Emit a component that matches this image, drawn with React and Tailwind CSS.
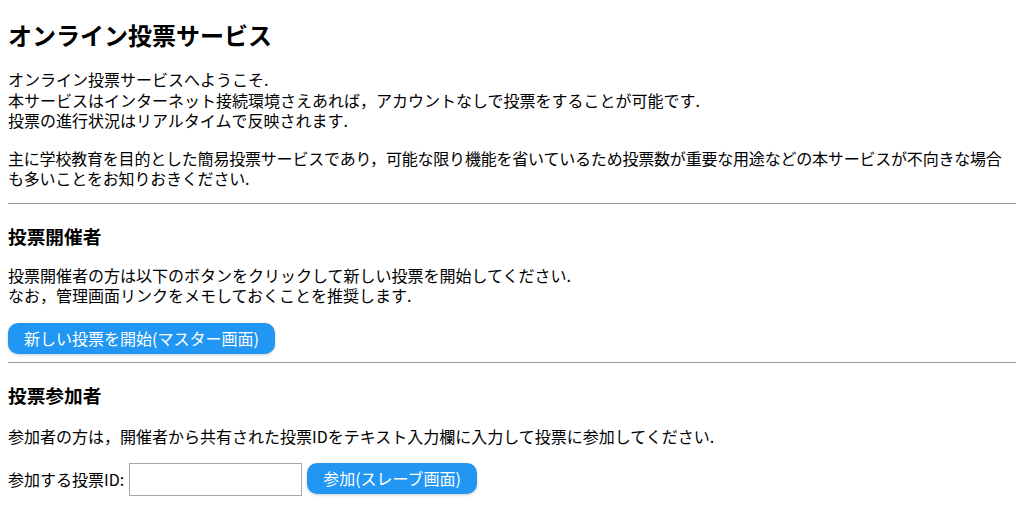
export default function App() {
  return (
    <div
      className="px-2 text-[16px] text-black bg-white min-h-[505px]"
      style={{ fontFamily: '"Noto Sans CJK JP", "Noto Sans", sans-serif' }}
    >
      <h2 className="pt-[21px] text-[24px] leading-[28px] font-bold">オンライン投票サービス</h2>
      <p className="mt-[20px] leading-[20.5px]">
        オンライン投票サービスへようこそ.<br />
        本サービスはインターネット接続環境さえあれば，アカウントなしで投票をすることが可能です.<br />
        投票の進行状況はリアルタイムで反映されます.
      </p>
      <p className="mt-[17px] leading-[20px] tracking-[-0.2px]">
        主に学校教育を目的とした簡易投票サービスであり，可能な限り機能を省いているため投票数が重要な用途などの本サービスが不向きな場合も多いことをお知りおきください.
      </p>
      <hr className="mt-[15px] border-0 h-px bg-[#9a9a9a]" />
      <h3 className="mt-[20px] text-[18.7px] leading-[24px] font-bold">投票開催者</h3>
      <p className="mt-[17px] leading-[20.5px]">
        投票開催者の方は以下のボタンをクリックして新しい投票を開始してください.<br />
        なお，管理画面リンクをメモしておくことを推奨します.
      </p>
      <button className="mt-[17px] h-[31px] px-[16px] rounded-[10px] bg-[#2196f3] text-white text-[16px] leading-[31px] shadow-[0_1px_3px_rgba(0,0,0,0.2)]">
        新しい投票を開始(マスター画面)
      </button>
      <hr className="mt-[8px] border-0 h-px bg-[#9a9a9a]" />
      <h3 className="mt-[20px] text-[18.7px] leading-[24px] font-bold">投票参加者</h3>
      <p className="mt-[19px] leading-[20.5px]">
        参加者の方は，開催者から共有された投票IDをテキスト入力欄に入力して投票に参加してください.
      </p>
      <div className="mt-[17px] flex items-start gap-[5px]">
        <label className="leading-[33px]">参加する投票ID:</label>
        <input
          type="text"
          className="w-[173px] h-[33px] border border-[#a8a8a8] bg-white outline-none"
        />
        <button className="h-[31px] px-[16px] rounded-[10px] bg-[#2196f3] text-white text-[16px] leading-[31px] shadow-[0_1px_3px_rgba(0,0,0,0.2)]">
          参加(スレーブ画面)
        </button>
      </div>
    </div>
  );
}
